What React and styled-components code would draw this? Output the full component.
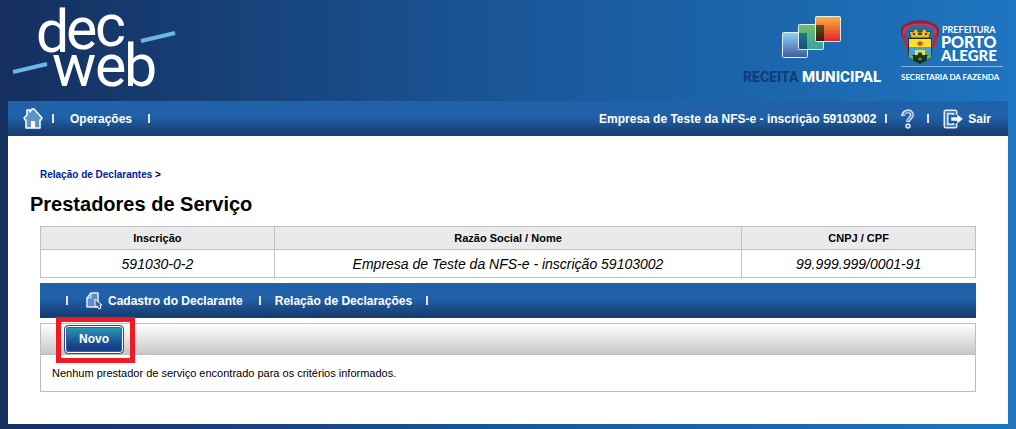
import React from 'react';
import styled, { createGlobalStyle } from 'styled-components';

const declarante = {
  inscricao: '591030-0-2',
  nome: 'Empresa de Teste da NFS-e - inscrição 59103002',
  cnpj: '99.999.999/0001-91',
};

function DecWebLogo() {
  return (
    <svg width="164" height="90" viewBox="0 0 164 90" overflow="visible" role="img" aria-label="decweb">
      <g fill="#fff" fontFamily="Roboto, sans-serif" fontSize="59">
        <text x="23 53 82" y="45 42 39">dec</text>
        <text x="39 82 111" y="79">web</text>
      </g>
      <path d="M0 65 34 57M128 34 162 26" stroke="#69b7e3" strokeWidth="4" />
    </svg>
  );
}

function ReceitaLogo() {
  return (
    <svg width="144" height="74" viewBox="0 0 144 74" role="img" aria-label="Receita Municipal">
      <defs>
        <linearGradient id="blueTile" x2="0" y2="1">
          <stop stopColor="#8fd5fa" />
          <stop offset="1" stopColor="#3d5a9e" />
        </linearGradient>
        <linearGradient id="greenTile" x2="0" y2="1">
          <stop stopColor="#70c063" />
          <stop offset="1" stopColor="#36a3a5" />
        </linearGradient>
        <linearGradient id="orangeTile" x2="0" y2="1">
          <stop stopColor="#fdb040" />
          <stop offset="1" stopColor="#e0232b" />
        </linearGradient>
        <linearGradient id="tealOverlap" x2="0" y2="1">
          <stop stopColor="#1c7a86" />
          <stop offset="1" stopColor="#164e70" />
        </linearGradient>
        <linearGradient id="brownOverlap" x2="0" y2="1">
          <stop stopColor="#4f5a16" />
          <stop offset="1" stopColor="#4a1116" />
        </linearGradient>
      </defs>
      <g stroke="#e6f0fa">
        <rect x="40.5" y="19.5" width="25" height="25" rx="1" fill="url(#blueTile)" />
        <rect x="56.5" y="11.5" width="25" height="25" rx="1" fill="url(#greenTile)" />
        <rect x="73.5" y="3.5" width="25" height="25" rx="1" fill="url(#orangeTile)" />
      </g>
      <rect x="57" y="20" width="8" height="16" fill="url(#tealOverlap)" />
      <rect x="74" y="12" width="8" height="16" fill="url(#brownOverlap)" />
      <g fontFamily="Roboto, sans-serif" fontWeight="800">
        <text x="1" y="69" fontSize="14" fill="#103c78">RECEITA</text>
        <text x="60" y="69" fontSize="15" fill="#fff">MUNICIPAL</text>
      </g>
    </svg>
  );
}

function PrefeituraLogo() {
  return (
    <svg width="104" height="68" viewBox="0 0 104 68" role="img" aria-label="Prefeitura Porto Alegre">
      {/* ribbon */}
      <path d="M5 19C1 11 3 7 9 6C12 2 16 5 20 3C24 5 28 2 31 6C37 7 39 12 35 19" fill="none" stroke="#8d2439" strokeWidth="4" />
      <path d="M4 16C3 10 5 8 10 7C14 4 17 7 20 5C23 7 27 4 30 7C35 8 37 11 35 16" fill="none" stroke="#e0323f" strokeWidth="2" />
      <path d="M5 16 4 21 8 29M35 16 36 21 32 29" fill="none" stroke="#b82a3b" strokeWidth="3" />
      {/* mural crown */}
      <path d="M9 12 13 13 14 10H18V13H22V10H26L27 13 31 12 29 19H11Z" fill="#e5bf28" stroke="#463d23" />
      <path d="M13 15H15M18 15H22M25 15H27" stroke="#4b4218" strokeWidth="2" />
      {/* shield */}
      <path d="M8 19H32V34C32 40 26 42 20 45C14 42 8 40 8 34Z" fill="#222f38" />
      <path d="M9 20H31V28H9Z" fill="#f9df27" />
      <path d="M9 28H31V36H9Z" fill="#42a5d6" />
      <path d="M9 36H14L17 34H23L26 36H31C29 41 25 41 20 44C15 41 11 41 9 36Z" fill="#17381f" />
      <path d="M20 22V27M17 24.500H23" stroke="#d44628" strokeWidth="2" />
      <path d="M15 36V31H25V36H22V33H18V36Z" fill="#f5d635" />
      <path d="M9 35 13 37V41L9 38ZM31 35 27 37V41L31 38Z" fill="#79b832" />
      <path d="M18 41 20 38 22 41Z" fill="#75a52e" />
      <g fill="#fff" fontFamily="Lato, 'Open Sans', sans-serif" fontWeight="700">
        <text x="42" y="14" fontSize="9">PREFEITURA</text>
        <text x="41" y="29" fontSize="16" fontWeight="900">PORTO</text>
        <text x="41" y="42" fontSize="15" fontWeight="900">ALEGRE</text>
        <text x="1" y="61" fontSize="8">SECRETARIA DA FAZENDA</text>
      </g>
      <path d="M1 47.5H103" stroke="#85b4df" />
    </svg>
  );
}

function HomeIcon() {
  return (
    <svg width="20" height="21" viewBox="0 0 20 21" aria-hidden="true">
      <path d="M1 10 4 7V2H7V4L9 1H11L19 10 18 12H17V20H3V12H2Z" fill="#5f91cb" stroke="#fff" strokeWidth="1.500" strokeLinejoin="round" />
      <path d="M8 13H12V20H8Z" fill="#fff" />
    </svg>
  );
}

function HelpIcon() {
  return (
    <svg width="14" height="20" viewBox="0 0 14 20" aria-hidden="true">
      <path d="M2 7C2 1 11 1 11 6C11 9 7 9 7 13" fill="none" stroke="#dce8f5" strokeWidth="4" />
      <path d="M3 6C3 2 11 1 11 6C11 9 7 9 7 12" fill="none" stroke="#4f80bd" strokeWidth="1.500" />
      <circle cx="7" cy="17" r="2" fill="#3f73b5" stroke="#dce8f5" strokeWidth="1.500" />
    </svg>
  );
}

function ExitIcon() {
  return (
    <svg width="20" height="20" viewBox="0 0 20 20" aria-hidden="true">
      <path d="M12 6V3H3V17H12V14" fill="none" stroke="#e2ecf7" strokeWidth="5" strokeLinejoin="round" />
      <path d="M12 6V3H3V17H12V14" fill="none" stroke="#5385c1" strokeWidth="2" />
      <path d="M8 8H14V5L20 10 14 15V12H8Z" fill="#fff" stroke="#2259a0" strokeWidth="0.500" />
    </svg>
  );
}

function DocumentIcon() {
  return (
    <svg width="17" height="18" viewBox="0 0 17 18" aria-hidden="true">
      <path d="M1 6 5 1H12V15H1Z" fill="#5e8cc4" stroke="#e4edf8" strokeWidth="1.500" strokeLinejoin="round" />
      <path d="M1 6H5V1" fill="none" stroke="#e4edf8" />
      <path d="M9 7V15L11 14 13 17 15 16 14 13H16Z" fill="#3467a8" stroke="#fff" strokeLinejoin="round" />
    </svg>
  );
}

function App() {
  return (
    <Page>
      <GlobalStyle />
      <Header>
        <DecWebLogo />
        <Brands>
          <ReceitaLogo />
          <PrefeituraLogo />
        </Brands>
      </Header>

      <MainNav>
        <NavLink href="#" aria-label="Início"><HomeIcon /></NavLink>
        <Divider $left={9} $right={16} />
        <NavLink href="#">Operações</NavLink>
        <Divider $left={16} />
        <NavUser>
          <span>{declarante.nome}</span>
          <Divider $left={9} $right={14} />
          <NavLink href="#" aria-label="Ajuda"><HelpIcon /></NavLink>
          <Divider $left={12} $right={14} />
          <NavLink href="#"><ExitIcon />Sair</NavLink>
        </NavUser>
      </MainNav>

      <Content>
        <Breadcrumb>
          <a href="#">Relação de Declarantes</a> &gt;
        </Breadcrumb>
        <Title>Prestadores de Serviço</Title>

        <Table>
          <thead>
            <tr>
              <Th $width="25%">Inscrição</Th>
              <Th $width="50%">Razão Social / Nome</Th>
              <Th $width="25%">CNPJ / CPF</Th>
            </tr>
          </thead>
          <tbody>
            <tr>
              <Td>{declarante.inscricao}</Td>
              <Td>{declarante.nome}</Td>
              <Td>{declarante.cnpj}</Td>
            </tr>
          </tbody>
        </Table>

        <SubNav>
          <Divider $right={18} />
          <NavLink href="#"><DocumentIcon />Cadastro do Declarante</NavLink>
          <Divider $left={16} $right={14} />
          <NavLink href="#">Relação de Declarações</NavLink>
          <Divider $left={14} />
        </SubNav>

        <Results>
          <Toolbar>
            <Highlight>
              <NewButton type="button">Novo</NewButton>
            </Highlight>
          </Toolbar>
          <Message>Nenhum prestador de serviço encontrado para os critérios informados.</Message>
        </Results>
      </Content>
    </Page>
  );
}

export default App;

const GlobalStyle = createGlobalStyle`
  * {
    box-sizing: border-box;
  }

  body {
    margin: 0;
    background: linear-gradient(to right, #152f5e, #1a5698 50%, #1e75c0);
    font-family: 'Liberation Sans', Arial, sans-serif;
    color: #000;
  }
`

const Page = styled.div`
  padding: 0 8px 5px;
`

const Header = styled.header`
  height: 101px;
  display: flex;
  justify-content: space-between;
  align-items: flex-start;
  padding: 7px 4px 0 5px;
`

const Brands = styled.div`
  display: flex;
  align-items: flex-end;
  gap: 14px;
  padding-top: 6px;
`

const Bar = styled.nav`
  height: 35px;
  display: flex;
  align-items: center;
  background: linear-gradient(#2161aa 45%, #173f74 90%);
  color: #fff;
  font-size: 12px;
  font-weight: bold;
`

const MainNav = styled(Bar)`
  padding: 0 17px 0 15px;
`

const NavUser = styled.div`
  display: flex;
  align-items: center;
  margin-left: auto;
`

const NavLink = styled.a`
  display: flex;
  align-items: center;
  gap: 5px;
  color: inherit;
  text-decoration: none;
`

const Divider = styled.span`
  width: 2px;
  height: 9px;
  margin-left: ${({ $left }) => $left || 0}px;
  margin-right: ${({ $right }) => $right || 0}px;
  background: #e5e5e5;
`

const Content = styled.main`
  padding: 32px 32px;
  background: #fff;
`

const Breadcrumb = styled.div`
  font-size: 10px;
  line-height: 14px;
  font-weight: bold;

  a {
    color: #001b9c;
    text-decoration: none;
  }
`

const Title = styled.h1`
  margin: 10px 0 10px -10px;
  font-size: 20px;
  line-height: 24px;
`

const Table = styled.table`
  width: 100%;
  table-layout: fixed;
  border-collapse: collapse;
  text-align: center;
`

const Th = styled.th`
  width: ${({ $width }) => $width};
  height: 23px;
  padding: 0;
  border: 1px solid #c0c0c8;
  background: #eaeaea;
  font-size: 11px;
`

const Td = styled.td`
  height: 28px;
  padding: 0;
  border: 1px solid #c0c0c8;
  font-size: 14px;
  font-style: italic;
`

const SubNav = styled(Bar)`
  margin: 5px 0;
  padding: 0 26px;
`

const Results = styled.section`
  border: 1px solid #c1bdb7;
`

const Toolbar = styled.div`
  height: 31px;
  display: flex;
  align-items: center;
  padding-left: 23px;
  border-bottom: 1px solid #c1bdb7;
  background: linear-gradient(#fff, #c8c8c8);
`

const Highlight = styled.div`
  position: relative;

  &::after {
    content: '';
    position: absolute;
    inset: -8px -11px -9px -8px;
    border: 5px solid #ed1c24;
    pointer-events: none;
  }
`

const NewButton = styled.button`
  display: block;
  width: 60px;
  height: 29px;
  border: 1px solid #2a4a98;
  border-radius: 4px;
  box-shadow: inset 0 0 0 1px #fff, inset 0 0 0 2px #3c5ba2;
  background: linear-gradient(#2a9fbb, #16408a 75%);
  color: #fff;
  font: bold 12px 'Liberation Sans', Arial, sans-serif;
`

const Message = styled.p`
  margin: 0;
  padding: 11px;
  font-size: 11px;
  line-height: 14px;
`
